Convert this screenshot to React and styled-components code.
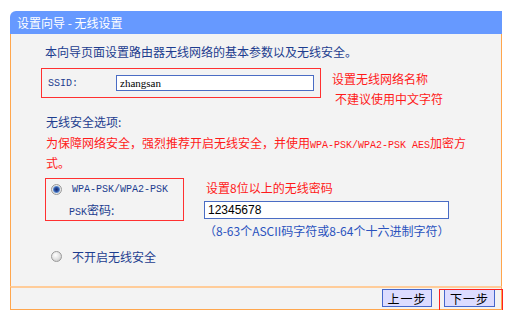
import React from "react";
import styled, { createGlobalStyle } from "styled-components";

const GlobalStyle = createGlobalStyle`
  html, body {
    margin: 0;
    padding: 0;
    background: #ffffff;
  }
  body {
    font-family: "Noto Sans CJK SC", "Liberation Sans", sans-serif;
    font-size: 12px;
  }
`;

const Page = styled.div`
  padding: 11px 16px 0 10px;
`;

const Panel = styled.div`
  width: 492px;
  box-sizing: border-box;
`;

const TitleBar = styled.div`
  height: 23px;
  background: #6699ff;
  border-top-left-radius: 6px;
  color: #ffffff;
  line-height: 23px;
  padding-left: 7px;
  font-size: 12px;
`;

const Body = styled.div`
  height: 252px;
  box-sizing: border-box;
  background: #f3f3f3;
  border-left: 1px solid #ffa64d;
  border-right: 1px solid #ffa64d;
  padding: 11px 0 0 34px;
  display: flex;
  flex-direction: column;
`;

const Text = styled.div`
  line-height: ${({ $lh }) => $lh || 14}px;
  color: ${({ $red }) => ($red ? "#ff1a1a" : "#1d3d8f")};
  margin-top: ${({ $mt }) => $mt || 0}px;
  margin-left: ${({ $ml }) => $ml || 0}px;
  white-space: nowrap;
`;

const Mono = styled.span`
  font-family: "Liberation Mono", "DejaVu Sans Mono", monospace;
  font-size: 10px;
`;

const SsidRow = styled.div`
  display: flex;
  align-items: flex-start;
  margin-top: 9px;
  margin-left: -4px;
`;

const MarkBox = styled.div`
  border: 1px solid #ff3030;
  box-sizing: border-box;
  width: ${({ $w }) => $w}px;
  height: ${({ $h }) => $h}px;
`;

const SsidBox = styled(MarkBox)`
  display: flex;
  align-items: center;
  padding-left: 6px;
`;

const FieldLabel = styled.div`
  width: ${({ $w }) => $w}px;
  color: #1d3d8f;
  font-family: "Liberation Mono", "DejaVu Sans Mono", monospace;
  font-size: 10px;
`;

const Input = styled.div`
  width: ${({ $w }) => $w}px;
  height: ${({ $h }) => $h}px;
  box-sizing: border-box;
  background: #ffffff;
  border: 1px solid #4a6cc4;
  display: flex;
  align-items: center;
  padding-left: 3px;
  color: #000;
  font-family: ${({ $serif }) =>
    $serif ? '"Liberation Serif", serif' : '"Liberation Sans", sans-serif'};
  font-size: ${({ $serif }) => ($serif ? 11 : 12)}px;
`;

const Notes = styled.div`
  margin-left: 11px;
  padding-top: 1px;
`;

const SecRow = styled.div`
  display: flex;
  align-items: flex-start;
  margin-top: 7px;
`;

const WpaBox = styled(MarkBox)`
  padding: 0 0 1px 5px;
  display: flex;
  flex-direction: column;
`;

const OptionLine = styled.div`
  display: flex;
  align-items: center;
  height: 20px;
  color: #1d3d8f;
`;

const PskLabel = styled.span`
  margin-left: 18px;
`;

const Radio = styled.span`
  width: 11px;
  height: 11px;
  border-radius: 50%;
  box-sizing: border-box;
  border: 1px solid #9a9a9a;
  background: ${({ $on }) =>
    $on
      ? "radial-gradient(circle, #1a2a6a 0, #2b4fa0 2px, #5a8ad0 3px, #e8e8e8 4px, #c8c8c8 100%)"
      : "radial-gradient(circle at 40% 35%, #ffffff 0, #e6e6e6 45%, #bdbdbd 100%)"};
  margin-right: 10px;
  flex-shrink: 0;
`;

const PskCol = styled.div`
  margin-left: 20px;
  display: flex;
  flex-direction: column;
`;

const PskInput = styled(Input)`
  margin-top: 3px;
`;

const Hint = styled.div`
  margin-top: 4px;
  line-height: 16px;
  color: #2a52be;
  font-size: 12px;
  white-space: nowrap;
`;

const OffRow = styled(OptionLine)`
  margin-top: 7px;
  margin-left: 6px;
`;

const Footer = styled.div`
  border: 1px solid #ffa64d;
  border-top: 2px solid #ffcc99;
  background: #f3f3f3;
  height: 24px;
  box-sizing: border-box;
  display: flex;
  justify-content: flex-end;
  align-items: flex-start;
  padding: 1px 6px 0 0;
  gap: 12px;
`;

const Button = styled.div`
  position: relative;
  width: ${({ $w }) => $w}px;
  height: 18px;
  box-sizing: border-box;
  background: #dcdcff;
  border: 1px solid #4466cc;
  color: #000;
  font-size: 12px;
  display: flex;
  align-items: center;
  justify-content: center;
  letter-spacing: 1px;

  ${({ $marked }) =>
    $marked &&
    `
    &::after {
      content: "";
      position: absolute;
      left: -6px;
      right: -9px;
      top: -1px;
      bottom: -5px;
      border: 1px solid #ff2020;
    }
  `}
`;

export default function App() {
  return (
    <>
      <GlobalStyle />
      <Page>
        <Panel>
          <TitleBar>设置向导 - 无线设置</TitleBar>
          <Body>
            <Text>本向导页面设置路由器无线网络的基本参数以及无线安全。</Text>
            <SsidRow>
              <SsidBox $w={280} $h={30}>
                <FieldLabel $w={68}>SSID:</FieldLabel>
                <Input $w={198} $h={16} $serif>
                  zhangsan
                </Input>
              </SsidBox>
              <Notes>
                <Text $red $lh={20}>设置无线网络名称</Text>
                <Text $red $lh={20} $ml={3}>
                  不建议使用中文字符
                </Text>
              </Notes>
            </SsidRow>
            <Text $mt={6} $ml={1}>无线安全选项:</Text>
            <Text $red $lh={17} $mt={5} $ml={1}>
              为保障网络安全，强烈推荐开启无线安全，并使用
              <Mono>WPA-PSK/WPA2-PSK AES</Mono>加密方
              <br />
              式。
            </Text>
            <SecRow>
              <WpaBox $w={139} $h={43}>
                <OptionLine>
                  <Radio $on />
                  <Mono>WPA-PSK/WPA2-PSK</Mono>
                </OptionLine>
                <OptionLine>
                  <PskLabel>
                    <Mono>PSK</Mono>密码:
                  </PskLabel>
                </OptionLine>
              </WpaBox>
              <PskCol>
                <Text $red $lh={20} $ml={2}>
                  设置8位以上的无线密码
                </Text>
                <PskInput $w={245} $h={18}>
                  12345678
                </PskInput>
                <Hint>（8-63个ASCII码字符或8-64个十六进制字符）</Hint>
              </PskCol>
            </SecRow>
            <OffRow>
              <Radio />
              不开启无线安全
            </OffRow>
          </Body>
          <Footer>
            <Button $w={50}>上一步</Button>
            <Button $w={51} $marked>
              下一步
            </Button>
          </Footer>
        </Panel>
      </Page>
    </>
  );
}
